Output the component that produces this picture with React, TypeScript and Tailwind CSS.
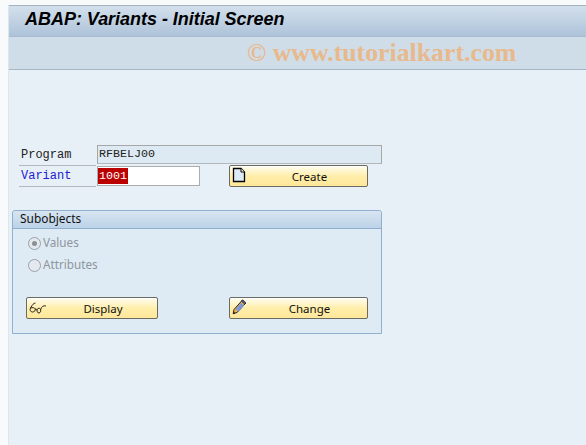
function SapButton({ w, label, icon }: { w: string; label: string; icon: React.ReactNode }) {
  return (
    <div className={`${w} h-[22px] shrink-0 flex items-center rounded-[2px] border border-[#6b6b62] bg-gradient-to-b from-[#fffdf0] via-[#ffeeaa] to-[#ffe79a] shadow-[inset_0_1px_0_#ffffff] font-['Noto_Sans','Liberation_Sans',sans-serif]`}>
      <span className="w-[22px] h-full shrink-0 flex items-center pl-[2px]">{icon}</span>
      <span className="flex-1 text-center text-[11.5px] text-[#111] pt-[2px]">{label}</span>
    </div>
  );
}

const DocIcon = (
  <svg width="14" height="16" viewBox="0 0 14 16" className="mt-[-3px]">
    <path d="M1.5 1.5H9L12.5 5V14.5H1.5Z" fill="#dcebf7" stroke="#000" strokeWidth="1.3" />
    <path d="M9 1.5V5H12.5" fill="#fff" stroke="#000" strokeWidth="1" />
  </svg>
);

const GlassesIcon = (
  <svg width="18" height="13" viewBox="0 0 18 13" fill="none" stroke="#111" strokeWidth="0.9">
    <path d="M6.5 1C4.5 1.2 3 3 1.5 6C0.5 8 1.5 10 3.5 10C5.5 10 6.8 8.2 6.2 6.8C5.7 5.7 3.2 5.2 1.8 6" />
    <path d="M6.2 7.3C7 6.6 8 7.2 8 8.4" />
    <path d="M8 8.4C8 6.6 9.5 6 10.6 6.4C12 6.9 12.2 9 11 10.5C9.8 11.8 8 10.8 8 8.4Z" />
    <path d="M11.8 7.2C12.6 4.5 14.5 3.2 17 4" />
  </svg>
);

const PencilIcon = (
  <svg width="15" height="17" viewBox="0 0 15 17" className="mt-[-3px]">
    <path d="M1.2 15.8L2 11.5L10.5 2L13.8 5L5.2 14.4Z" fill="#f0b050" stroke="#222" strokeWidth="1" strokeLinejoin="round" />
    <path d="M9.4 3.2L12.8 6.2L13.8 5L10.5 2Z" fill="#5a78c8" stroke="#222" strokeWidth="0.8" />
    <path d="M3.6 11.2L6.6 13.8L12 7.6L9 5Z" fill="#7d97d8" />
    <path d="M1.2 15.8L1.6 13.6L3.4 15.2Z" fill="#222" />
  </svg>
);

function Radio({ checked, label }: { checked?: boolean; label: string }) {
  return (
    <div className="flex items-center h-[22px] text-[11.7px] text-[#8f959c]">
      <span className="w-[13px] h-[13px] rounded-full border border-[#9aa0a6] bg-[#e3e9ef] flex items-center justify-center shrink-0">
        {checked && <span className="w-[5px] h-[5px] rounded-full bg-[#8a8f95]" />}
      </span>
      <span className="ml-[2px]">{label}</span>
    </div>
  );
}

export default function App() {
  return (
    <div className="w-[586px] h-[445px] overflow-hidden flex bg-[#f8fafc] font-['Noto_Sans','Liberation_Sans',sans-serif]">
      <div className="w-[8px] shrink-0" />
      <div className="flex-1 flex flex-col">
        <div className="h-[5px] shrink-0" />
        <div className="flex-1 flex flex-col bg-[#e8f0f7] border-l border-[#dfe5ec]">
          <div className="h-[32px] shrink-0 flex items-center pl-[16px] pb-[4px] border-t border-[#a4b3c4] border-b border-b-[#a9bccf] bg-gradient-to-b from-[#d3e0ec] to-[#aec3da]">
            <span className="text-[18px] font-bold italic text-black font-['Liberation_Sans',sans-serif] tracking-[-0.03px]">ABAP: Variants - Initial Screen</span>
          </div>
          <div className="h-[33px] shrink-0 flex items-center pl-[238px] bg-[#cfdde9] border-b border-[#a6b6c6]">
            <span className="text-[25.8px] leading-none font-bold text-[#e8b98c] font-['Liberation_Serif',serif]">© www.tutorialkart.com</span>
          </div>

          <div className="flex flex-col pl-[10px] pt-[75px]">
            <div className="flex items-stretch h-[21px] font-['Liberation_Mono',monospace] text-[12px]">
              <div className="w-[77px] shrink-0 flex items-center pl-[2px] text-[#222] border-b border-[#b3b8bd]">Program</div>
              <div className="ml-[1px] w-[285px] h-[19px] flex items-center pl-[1px] bg-[#deeaf3] border border-[#a6a8a8] border-b-[#b4b8ba] text-[#222] text-[11.7px]">RFBELJ00</div>
            </div>
            <div className="flex items-start h-[22px] font-['Liberation_Mono',monospace] text-[12px]">
              <div className="w-[77px] h-[21px] shrink-0 flex items-center pl-[2px] text-[#2020d0] border-b border-[#b3b8bd]">Variant</div>
              <div className="ml-[1px] w-[103px] h-[20px] shrink-0 flex items-center bg-white border border-[#a9adb0]">
                <span className="bg-[#bb0000] text-white h-[16px] leading-[16px] px-[1px] text-[11.7px]">1001</span>
              </div>
              <div className="ml-[29px] mt-[-1px]">
                <SapButton w="w-[139px]" label="Create" icon={DocIcon} />
              </div>
            </div>

            <div className="mt-[22px] ml-[-7px] w-[370px] h-[124px] flex flex-col rounded-t-[3px] border border-[#8fb0d0] bg-[#deeaf4]">
              <div className="h-[18px] shrink-0 flex items-center pl-[7px] pb-[2px] text-[11.9px] text-[#111] border-b border-[#8fb0d0] bg-gradient-to-b from-[#d8e5f1] to-[#bcd2e7] rounded-t-[3px]">
                Subobjects
              </div>
              <div className="flex flex-col pl-[15px] pt-[2px]">
                <div className="pt-[1px]">
                  <Radio checked label="Values" />
                  <Radio label="Attributes" />
                </div>
                <div className="flex mt-[21px] ml-[-2px]">
                  <SapButton w="w-[132px]" label="Display" icon={GlassesIcon} />
                  <div className="ml-[71px]">
                    <SapButton w="w-[139px]" label="Change" icon={PencilIcon} />
                  </div>
                </div>
              </div>
            </div>
          </div>
        </div>
      </div>
    </div>
  );
}
